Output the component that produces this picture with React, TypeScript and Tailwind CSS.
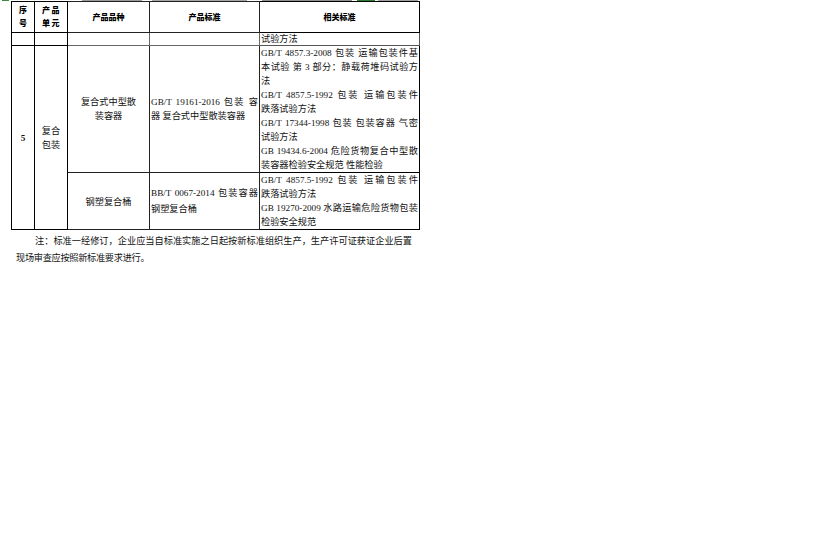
import React from "react";

const font = "font-['Liberation_Serif','Noto_Sans_CJK_SC',serif]";
const just = "text-justify [text-align-last:justify]";

function Lines({ lines }: { lines: [string, boolean][] }) {
  return (
    <>
      {lines.map(([t, j], i) => (
        <div key={i} className={j ? just : "text-left"}>
          {t}
        </div>
      ))}
    </>
  );
}

export default function App() {
  const cell = "border border-[#222] p-0 align-middle";
  return (
    <div className={`w-[819px] h-[545px] bg-white text-[#111] ${font}`}>
      {/* cut-off remnant of the previous page line */}
      <div className="relative h-px">
        <div className="absolute left-[2px] top-0 h-px w-[7px] bg-[#3c8a3c]" />
        <div className="absolute left-[82px] top-0 h-px w-[60px] bg-[#9a9a9a]" />
        <div className="absolute left-[152px] top-0 h-px w-[95px] bg-[#a5a5a5]" />
        <div className="absolute left-[262px] top-0 h-px w-[90px] bg-[#8f8f8f]" />
        <div className="absolute left-[357px] top-0 h-px w-[18px] bg-[#2f7d2f]" />
        <div className="absolute left-[378px] top-0 h-px w-[40px] bg-[#a0a0a0]" />
      </div>
      <table className="ml-[11px] border-collapse table-fixed border border-black w-[408px]">
        <colgroup>
          <col className="w-[23px]" />
          <col className="w-[33px]" />
          <col className="w-[82px]" />
          <col className="w-[110px]" />
          <col className="w-[160px]" />
        </colgroup>
        <tbody>
          <tr className="h-[31px] text-[8px] font-black leading-[13px] text-center text-black">
            <td className={`${cell} border-black`}>
              <div>序</div>
              <div>号</div>
            </td>
            <td className={`${cell} border-black`}>
              <div className="tracking-[1.5px] pl-[1px]">产品</div>
              <div className="tracking-[1.5px] pl-[1px]">单元</div>
            </td>
            <td className={cell}>产品品种</td>
            <td className={cell}>产品标准</td>
            <td className={`${cell} border-black`}>相关标准</td>
          </tr>
          <tr className="h-[12px] text-[9.2px] leading-[12px]">
            <td className={`${cell} border-black`} />
            <td className={`${cell} border-black`} />
            <td className={`${cell} border-[#666]`} />
            <td className={`${cell} border-[#666]`} />
            <td className={`${cell} pl-[1px] border-[#555]`}>试验方法</td>
          </tr>
          <tr className="h-[127px] text-[9.2px] leading-[14px]">
            <td rowSpan={2} className={`${cell} border-black text-center font-bold`}>
              5
            </td>
            <td rowSpan={2} className={`${cell} border-black text-center leading-[13.5px] pt-[2px]`}>
              <div>复合</div>
              <div>包装</div>
            </td>
            <td className={`${cell} text-center px-[4px]`}>
              <div>复合式中型散</div>
              <div>装容器</div>
            </td>
            <td className={`${cell} px-[1px]`}>
              <Lines
                lines={[
                  ["GB/T 19161-2016 包装 容", true],
                  ["器 复合式中型散装容器", false],
                ]}
              />
            </td>
            <td className={`${cell} pl-[1px] pr-[1px] border-black`}>
              <Lines
                lines={[
                  ["GB/T 4857.3-2008 包装 运输包装件基", true],
                  ["本试验 第 3 部分：静载荷堆码试验方", true],
                  ["法", false],
                  ["GB/T 4857.5-1992 包装 运输包装件", true],
                  ["跌落试验方法", false],
                  ["GB/T 17344-1998 包装 包装容器 气密", true],
                  ["试验方法", false],
                  ["GB 19434.6-2004 危险货物复合中型散", true],
                  ["装容器检验安全规范 性能检验", false],
                ]}
              />
            </td>
          </tr>
          <tr className="h-[56px] text-[9.2px] leading-[14px]">
            <td className={`${cell} text-center pt-[1px]`}>钢塑复合桶</td>
            <td className={`${cell} px-[1px] leading-[15.5px] pt-[1px]`}>
              <Lines
                lines={[
                  ["BB/T 0067-2014 包装容器", true],
                  ["钢塑复合桶", false],
                ]}
              />
            </td>
            <td className={`${cell} pl-[1px] pr-[1px] border-black`}>
              <Lines
                lines={[
                  ["GB/T 4857.5-1992 包装 运输包装件", true],
                  ["跌落试验方法", false],
                  ["GB 19270-2009 水路运输危险货物包装", true],
                  ["检验安全规范", false],
                ]}
              />
            </td>
          </tr>
        </tbody>
      </table>
      <div className="w-[396px] ml-[16px] mt-[3px] text-[9.2px] leading-[17px]">
        <div className={`pl-[19px] ${just}`}>
          注：标准一经修订，企业应当自标准实施之日起按新标准组织生产，生产许可证获证企业后置
        </div>
        <div className="tracking-[-0.3px]">现场审查应按照新标准要求进行。</div>
      </div>
    </div>
  );
}
